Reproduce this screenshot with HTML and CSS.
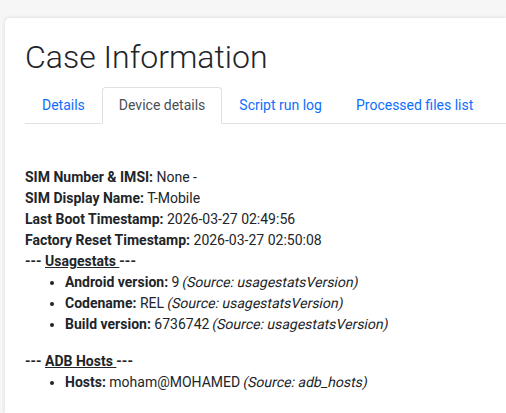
FILE: index.html
```html
<!DOCTYPE html>
<html lang="en">
<head>
<meta charset="utf-8">
<title>Case Information</title>
<link rel="stylesheet" href="styles.css">
</head>
<body>
<div class="card">
  <h1 class="title">Case Information</h1>
  <ul class="tabs">
    <li class="tab"><a class="tab-link">Details</a></li>
    <li class="tab"><a class="tab-link active">Device details</a></li>
    <li class="tab"><a class="tab-link">Script run log</a></li>
    <li class="tab"><a class="tab-link">Processed files list</a></li>
  </ul>
  <div class="content">
    <div class="line"><b>SIM Number &amp; IMSI:</b> None -</div>
    <div class="line"><b>SIM Display Name:</b> T-Mobile</div>
    <div class="line"><b>Last Boot Timestamp:</b> 2026-03-27 02:49:56</div>
    <div class="line"><b>Factory Reset Timestamp:</b> 2026-03-27 02:50:08</div>
    <div class="line"><b>--- <u>Usagestats </u>---</b></div>
    <ul class="items">
      <li><b>Android version:</b> 9 <i class="src">(Source: usagestatsVersion)</i></li>
      <li><b>Codename:</b> REL <i class="src">(Source: usagestatsVersion)</i></li>
      <li><b>Build version:</b> 6736742 <i class="src">(Source: usagestatsVersion)</i></li>
    </ul>
    <div class="line"><b>--- <u>ADB Hosts </u>---</b></div>
    <ul class="items">
      <li><b>Hosts:</b> moham@MOHAMED <i class="src">(Source: adb_hosts)</i></li>
    </ul>
  </div>
</div>
</body>
</html>
```

FILE: styles.css
```css
html, body {
  margin: 0;
  padding: 0;
}
html {
  overflow: hidden;
}
body {
  background: #f6f6f6;
  font-family: Roboto, "Liberation Sans", sans-serif;
  font-size: 14px;
  line-height: 21px;
  color: #212529;
  padding: 18px 0 0 5px;
  height: 413px;
  box-sizing: border-box;
  overflow: hidden;
}
.card {
  background: #fff;
  border-radius: 5px 0 0 0;
  box-shadow: 0 0 4px rgba(0, 0, 0, 0.12);
  padding: 20px 0 0 20px;
  height: 395px;
  box-sizing: border-box;
}
.title {
  font-size: 32px;
  font-weight: 300;
  line-height: 38px;
  margin: 0 0 11px 0;
  color: #212529;
}
.tabs {
  display: flex;
  list-style: none;
  margin: 0;
  padding: 0;
  border-bottom: 1px solid #dee2e6;
}
.tab {
  margin-bottom: -1px;
}
.tab-link {
  display: block;
  padding: 7px 16px;
  border: 1px solid transparent;
  border-top-left-radius: 4px;
  border-top-right-radius: 4px;
  color: #0d6efd;
  line-height: 21px;
}
.tab-link.active {
  color: #495057;
  background: #fff;
  border-color: #dee2e6 #dee2e6 #fff;
}
.content {
  padding-top: 43px;
}
.items {
  margin: 0 0 16px 0;
  padding-left: 40px;
}
.src {
  font-style: normal;
  display: inline-block;
  margin-left: -1px;
  transform: skewX(-12deg);
  transform-origin: 0 60%;
}
```
